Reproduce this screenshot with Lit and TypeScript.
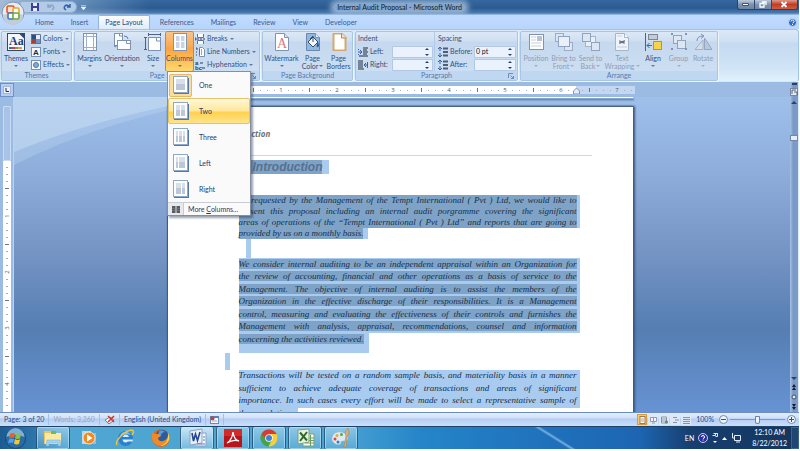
import { LitElement, html, css, svg, nothing, TemplateResult } from "lit";
import { customElement } from "lit/decorators.js";
import { classMap } from "lit/directives/class-map.js";

const wrap = (size: number, body: unknown) =>
  html`<svg width=${size} height=${size} viewBox="0 0 ${size} ${size}" aria-hidden="true">${body}</svg>`;

const sheet = (x: number, y: number, w: number, h: number) =>
  svg`<rect x=${x + 0.5} y=${y + 0.5} width=${w} height=${h} fill="#fdfeff" stroke="#7f93ae"/>`;

const box = (x: number, y: number, w: number, h: number, fill: string, stroke: string) =>
  svg`<rect x=${x} y=${y} width=${w} height=${h} fill=${fill} stroke=${stroke}/>`;

/* Large 18px ribbon icons */
const big: Record<string, TemplateResult> = {
  themes: wrap(18, svg`${box(0.5, 0.5, 17, 17, "#f4f7fb", "#31486b")}<path d="M12 .5h5.500v5.500z" fill="#31486b"/>
    <text x="2" y="12" font-family="Liberation Serif, serif" font-weight="700" font-size="12" fill="#24406e">Aa</text>
    <path d="M2 15h3" stroke="#3a6cb4" stroke-width="2"/><path d="M5 15h3" stroke="#c8453c" stroke-width="2"/><path d="M8 15h3" stroke="#7aa03c" stroke-width="2"/><path d="M11 15h4" stroke="#e89a3c" stroke-width="2"/>`),
  margins: wrap(18, svg`${sheet(2, 0, 13, 17)}<path d="M5.500 1v16M12.500 1v16M3 3.500h12M3 14.500h12" stroke="#9fb2cc" fill="none"/>`),
  orientation: wrap(18, svg`${sheet(1, 0, 8, 12)}<path d="M6.500 0v3h3" fill="none" stroke="#7f93ae"/>${sheet(4, 7, 13, 9)}<path d="M13.500 7v3.500h4" fill="none" stroke="#7f93ae"/><path d="M11 3q4 0 4 3M4 12q-1 3-3 1" fill="none" stroke="#5a7eae"/>`),
  size: wrap(18, svg`${sheet(4, 4, 12, 13)}<path d="M12.500 4v4h4" fill="none" stroke="#7f93ae"/><path d="M4 1.500h13M4.500 0v3M16.500 0v3M1.500 4v13M0 4.500h3M0 16.500h3" stroke="#49648c" fill="none"/>`),
  columns: wrap(18, svg`${sheet(2, 0, 13, 17)}<path d="M5 3h3.500v5H5zM10 3h3.500v5H10zM5 9h3.500v6H5zM10 9h3.500v6H10z" fill="#c9d3e3"/>`),
  watermark: wrap(18, svg`<path d="M2.500.5h9l4 4v13h-13z" fill="#fdfeff" stroke="#7f93ae"/><path d="M11.500.5v4h4" fill="#dbe5f1" stroke="#7f93ae"/><text x="4" y="15" font-family="Liberation Serif, serif" font-size="14" fill="#d77d7d">A</text>`),
  color: wrap(18, svg`<path d="M2.500.5h9l4 4v13h-13z" fill="#8fb8e2" stroke="#6c87a9"/><path d="M11.500.5v4h4" fill="#e8f1fa" stroke="#7f93ae"/><path d="M4 9l5-5 5 5-5 5z" fill="#f3f6fa" stroke="#34506f"/><path d="M6 6l3-3v6" fill="none" stroke="#34506f"/><path d="M14 9q2 4 0 5t-1-3z" fill="#2b5c98"/>`),
  borders: wrap(18, svg`<path d="M3.500.5h8l4 4v13h-12z" fill="#fff" stroke="#d8a76c" stroke-width="2"/><path d="M11.500 0v5h5" fill="#f3dfc4" stroke="#b58a52"/>`),
  position: wrap(18, svg`${sheet(2, 1, 14, 15)}<rect x="10" y="3" width="5" height="5" fill="#b7c2d6"/><path d="M4 4h5M4 7h5M4 10h10M4 13h10" stroke="#c6cfde"/>`),
  front: wrap(18, svg`${box(0.5, 0.5, 8, 8, "#dce6f3", "#9aacc6")}${box(9.5, 9.5, 8, 8, "#dce6f3", "#9aacc6")}${box(3.5, 3.5, 11, 10, "#e9f0f9", "#8fa3c0")}`),
  back: wrap(18, svg`${box(3.5, 3.5, 10, 10, "#e9f0f9", "#a4b4cc")}${box(0.5, 0.5, 8, 8, "#dce6f3", "#8fa3c0")}${box(9.5, 9.5, 8, 8, "#dce6f3", "#8fa3c0")}`),
  wrapping: wrap(18, svg`<path d="M2.500.5h9l4 4v13h-13z" fill="#eff4fa" stroke="#a4b4cc"/><path d="M11.500.5v4h4" fill="#fff" stroke="#a4b4cc"/><path d="M6 7q2 2 6 0-1 3 0 4l-3-1-3 1q1-2 0-4" fill="#66758f"/><path d="M4 3h5M4 14h10" stroke="#c6cfde"/>`),
  align: wrap(18, svg`<path d="M1.500 0v18" stroke="#2f67b1"/>${box(4.5, 1.5, 9, 5, "#c3cbd6", "#7b8797")}${box(9.5, 8.5, 8, 8, "#f8d248", "#c0922d")}<path d="M3 12.500h5M5.500 10L3 12.500 5.500 15" fill="none" stroke="#2f67b1"/>`),
  group: wrap(18, svg`${box(3.5, 2.5, 8, 8, "#dde7f3", "#8fa3c0")}${box(7.5, 7.5, 8, 8, "#dde7f3", "#8fa3c0")}<path d="M1 1h2M15 1h2M1 16h2M15 16h2" stroke="#8093b4" stroke-width="2"/>`),
  rotate: wrap(18, svg`<path d="M1 16.500h8V7z" fill="#d5dfec" stroke="#a3b2c9"/><path d="M10.500 5v11.500H18z" fill="#b9c7db" stroke="#94a6c1"/><path d="M3 8q0-5 6-5M7 1l3 2-3 2.500" fill="none" stroke="#7c91b3"/>`),
};

/* Small 10px ribbon icons */
const small: Record<string, TemplateResult> = {
  colors: wrap(10, svg`<path d="M0 0h5v5H0z" fill="#2a4e84"/><path d="M5 0h5v5H5z" fill="#e9eef6"/><path d="M0 5h5v5H0z" fill="#a8402f"/><path d="M5 5h5v5H5z" fill="#6e94cc"/><path d="M.5.5h9v9h-9z" fill="none" stroke="#5b7498"/>`),
  fonts: wrap(10, svg`${box(0.5, 0.5, 9, 9, "#f4f7fb", "#7990b2")}<text x="2" y="8" font-family="Liberation Sans, sans-serif" font-weight="700" font-size="8" fill="#1d2d4a">A</text>`),
  effects: wrap(10, svg`${box(0.5, 0.5, 9, 9, "#f4f7fb", "#7990b2")}<circle cx="5" cy="5" r="2.500" fill="#7faadd" stroke="#4c79b4"/>`),
  breaks: wrap(10, svg`<path d="M2.500 0v3.500h6V0M2.500 10V6.500h6V10" fill="#fff" stroke="#5b7498"/><path d="M2 5h8" stroke="#2b4570" stroke-dasharray="2 1"/><path d="M0 3l2 2-2 2z" fill="#2f67b1"/>`),
  lines: wrap(10, svg`<path d="M1 1h1v2M1 5h1M1 8h1" stroke="#2b4570" fill="none"/><path d="M4.500.5h3l2 2v7h-5z" fill="#fff" stroke="#7990b2"/><path d="M4 3h4M4 5h4M4 7h4" stroke="#33507c" stroke-dasharray="1 1"/>`),
  hyphen: wrap(10, svg`<text x="0" y="5" font-family="Liberation Sans, sans-serif" font-weight="700" font-size="6" fill="#2b3c58">a</text><path d="M5 3h3M7 8h3" stroke="#2b3c58"/><text x="0" y="10" font-family="Liberation Sans, sans-serif" font-weight="700" font-size="6" fill="#2b3c58">bc</text>`),
  left: wrap(10, svg`<path d="M5 1h5M5 3h4M5 5h5M5 7h4M1 9h9" stroke="#222d40"/><path d="M0 5h4M2 3l2 2-2 2M.5 2v1M.5 7v1" stroke="#3563a5" fill="none"/>`),
  right: wrap(10, svg`<path d="M0 1h5M0 3h5M0 5h5M0 7h5M0 9h6" stroke="#222d40"/><path d="M9 5H6M8 3L6 5l2 2M9.500 2v6" stroke="#3563a5" fill="none"/>`),
  before: wrap(10, svg`<path d="M5 1.500h5M5 5h5M5 8.500h5" stroke="#4b5e7d" stroke-width="2"/><path d="M2 0v4M0 2l2-2 2 2M2 6v4M0 8l2 2 2-2" stroke="#3563a5" fill="none"/>`),
};

const colIcon = (kind: string) => {
  const cols: Record<string, number[][]> = {
    One: [[3, 9]],
    Two: [[3, 4], [8, 4]],
    Three: [[3, 2], [6, 3], [10, 2]],
    Left: [[3, 2], [6, 6]],
    Right: [[3, 5], [9, 3]],
  };
  return html`<svg width="16" height="18" viewBox="0 0 16 18" aria-hidden="true">
    <path d="M1 2h15v16H1z" fill="#5479a8"/>
    <rect x=".5" y=".5" width="14" height="16" fill="#fff" stroke="#8ba9cc"/>
    ${cols[kind].map(([x, w]) => svg`<path d=${`M${x} 3h${w}v5h-${w}z`} fill="#d8dfe9"/><path d=${`M${x} 8h${w}v6h-${w}z`} fill="#bcc8d8"/>`)}
  </svg>`;
};

const caret = html`<svg class="caret" width="4" height="2" viewBox="0 0 4 2" aria-hidden="true"><path d="M0 0h4L2 2z" fill="currentColor"/></svg>`;
const launcher = html`<svg class="launch" width="6" height="6" viewBox="0 0 6 6" aria-hidden="true"><path d="M.5 5V.5H5M2.500 2.500l3 3M5.500 3v2.500H3" fill="none" stroke="#6c8db9"/></svg>`;

@customElement("word-ribbon")
export class WordRibbon extends LitElement {
  static styles = css`
    :host { display: block; }
    button, input { font: inherit; color: inherit; border: 0; padding: 0; margin: 0; background: none; }
    svg { display: block; flex: none; }
    .tabs { display: flex; gap: 3px; height: 14px; padding-left: 28px; align-items: stretch; background: linear-gradient(#bfdbff, #b9d4fb); }
    .tab { padding: 0 7px; color: #3c5a8c; white-space: nowrap; }
    .tab.on { background: linear-gradient(#fbfdff, #e0ebf8); border: 1px solid #93b4df; border-bottom: 0; border-radius: 2px 2px 0 0; padding: 0 6px; color: #2a4675; }
    .help { margin-left: auto; padding-right: 2px; align-self: center; }
    .body { display: grid; grid-template-columns: 71px 186px 91px 163px 198px; gap: 2px; height: 53px; box-sizing: border-box; padding: 1px 1px 1px 1px; border: 1px solid #a3c3e8; border-width: 1px 1px 0 0; border-bottom: 1px solid #d4e8fb; background: linear-gradient(#dbe8f7 0, #cddff3 12px, #c5d9f0 13px, #d0e4f6 38px, #dff1fb 50px); border-radius: 0 3px 3px 0; }
    .group { position: relative; display: flex; flex-direction: column; border: 1px solid #a9c5e6; border-radius: 2px; background: linear-gradient(#dce8f6 0, #cfdff1 9px, #c5d8ee 10px, #cfe0f3); box-shadow: 1px 1px 0 #eef6fd; min-width: 0; }
    .tools { display: flex; flex: 1; padding-left: 1px; }
    .label { height: 9px; line-height: 9px; text-align: center; color: #5578ac; background: #bfd7f1; position: relative; }
    .launch { position: absolute; right: 3px; top: 2px; }
    .caret { opacity: .7; }
    .btn { display: flex; flex-direction: column; align-items: center; width: var(--w); padding-top: 1px; color: #33517f; line-height: 8px; box-sizing: border-box; }
    .btn svg + .cap { margin-top: 3px; }
    .cap { white-space: nowrap; text-align: center; }
    .cap .caret { display: inline-block; vertical-align: 2px; margin-left: 1px; }
    .btn > .caret { margin-top: 3px; }
    .btn.off { color: #8f9cb3; }
    .btn.hot { background: linear-gradient(#fbc386 0, #f9a94e 15px, #fba23f 16px, #fdd66f 38px); box-shadow: 0 0 0 1px #b98a4c; border-radius: 2px; margin-left: 1px; color: #3f4d63; }
    .rows { display: grid; grid-template-rows: repeat(3, 13px); margin-left: 2px; }
    .row { display: flex; align-items: center; gap: 2px; color: #33517f; white-space: nowrap; }
    .fields { display: grid; grid-template-columns: 10px 20px 41px; grid-template-rows: repeat(3, 13px); align-items: center; column-gap: 2px; padding: 0 1px; color: #33517f; }
    .fields.wide { grid-template-columns: 10px 22px 42px; border-left: 1px solid #b2cae6; padding-left: 3px; }
    .fields .title { grid-column: 1 / 4; }
    .fields label { white-space: nowrap; }
    .spin { position: relative; height: 12px; box-sizing: border-box; border: 1px solid #b2c9e6; background: #eaf3fd; display: flex; align-items: center; justify-content: space-between; padding-right: 3px; }
    .spin input { min-width: 0; width: 24px; padding-left: 1px; outline: 0; color: #111; }
    .menu { position: absolute; z-index: 5; left: 92px; top: 39px; width: 84px; box-sizing: border-box; border: 1px solid #868fa0; background: #fafafb; box-shadow: 2px 2px 2px rgba(30, 50, 80, .45); color: #2a3a6c; }
    .item { display: flex; align-items: center; width: 100%; height: 26px; box-sizing: border-box; border: 1px solid transparent; padding-right: 4px; }
    .item .pic { display: flex; align-items: center; justify-content: center; width: 23px; height: 23px; box-sizing: border-box; border: 1px solid transparent; }
    .item .name { padding-left: 7px; }
    .item.cur .pic { border: 1px solid #e5b766; background: #fbdc9a; border-radius: 2px; }
    .item.sel { background: linear-gradient(#fff7d9 0, #ffe89a 12px, #ffd24d 13px, #ffe48d); border-color: #e3c36b; border-radius: 2px; }
    .more { display: flex; align-items: stretch; width: 100%; height: 13px; border-top: 1px solid #c9cdd3; line-height: 12px; white-space: nowrap; }
    .more .pic { width: 15px; display: flex; align-items: center; justify-content: center; background: #e6eaec; border-right: 1px solid #c9cdd3; }
    .more .name { padding-left: 4px; }
  `;

  private btn(icon: string, lines: string[], w: number, opts: { off?: boolean; hot?: boolean; plain?: boolean } = {}) {
    const two = lines.length > 1;
    return html`<button class=${classMap({ btn: true, off: !!opts.off, hot: !!opts.hot })} style="--w:${w}px" ?disabled=${!!opts.off}>
      ${big[icon]}
      <span class="cap">${lines[0]}${two ? html`<br />${lines[1]}${opts.plain ? nothing : caret}` : nothing}</span>
      ${two ? nothing : caret}
    </button>`;
  }
  private row(icon: string, name: string) {
    return html`<button class="row">${small[icon]}<span>${name}</span>${caret}</button>`;
  }
  private field(icon: string, name: string, value: string) {
    return html`${small[icon]}<label for=${name}>${name}:</label>
      <span class="spin"><input id=${name} type="text" .value=${value} />
        <svg width="4" height="8" viewBox="0 0 4 8" aria-hidden="true"><path d="M0 2h4L2 0zM0 6h4L2 8z" fill="#27406b"/></svg></span>`;
  }

  render() {
    const tabs = ["Home", "Insert", "Page Layout", "References", "Mailings", "Review", "View", "Developer"];
    const off = { off: true };
    return html`
      <div class="tabs" role="tablist">
        ${tabs.map((t) => html`<button role="tab" class=${classMap({ tab: true, on: t === "Page Layout" })}>${t}</button>`)}
        <button class="help" aria-label="Help"><svg width="9" height="9" viewBox="0 0 9 9"><circle cx="4.500" cy="4.500" r="4" fill="#2f69bd" stroke="#c6dcf7"/><path d="M3 3.500q0-1.500 1.500-1.500T6 3.500 4.500 5M4.500 6v1" stroke="#fff" fill="none"/></svg></button>
      </div>
      <div class="body">
        <section class="group">
          <div class="tools">${this.btn("themes", ["Themes"], 26)}
            <div class="rows">${this.row("colors", "Colors")}${this.row("fonts", "Fonts")}${this.row("effects", "Effects")}</div></div>
          <div class="label">Themes</div>
        </section>
        <section class="group">
          <div class="tools">
            ${this.btn("margins", ["Margins"], 27)}${this.btn("orientation", ["Orientation"], 38)}${this.btn("size", ["Size"], 24)}${this.btn("columns", ["Columns"], 27, { hot: true })}
            <div class="rows">${this.row("breaks", "Breaks")}${this.row("lines", "Line Numbers")}${this.row("hyphen", "Hyphenation")}</div>
          </div>
          <div class="label">Page Setup${launcher}</div>
          <div class="menu" role="menu">
            ${["One", "Two", "Three", "Left", "Right"].map((n) => html`<button role="menuitem" class=${classMap({ item: true, cur: n === "One", sel: n === "Two" })}><span class="pic">${colIcon(n)}</span><span class="name">${n}</span></button>`)}
            <button role="menuitem" class="more"><span class="pic"><svg width="8" height="7" viewBox="0 0 8 7"><path d="M0 0h3.500v7H0zM4.500 0H8v7H4.500z" fill="#585c60"/><path d="M0 2.500h8M0 4.500h8" stroke="#84888c" stroke-width=".5"/></svg></span><span class="name">More <u>C</u>olumns...</span></button>
          </div>
        </section>
        <section class="group">
          <div class="tools">${this.btn("watermark", ["Watermark"], 35)}${this.btn("color", ["Page", "Color"], 27)}${this.btn("borders", ["Page", "Borders"], 25, { plain: true })}</div>
          <div class="label">Page Background</div>
        </section>
        <section class="group">
          <div class="tools">
            <div class="fields"><span class="title">Indent</span>${this.field("left", "Left", "")}${this.field("right", "Right", "")}</div>
            <div class="fields wide"><span class="title">Spacing</span>${this.field("before", "Before", "0 pt")}${this.field("before", "After", "")}</div>
          </div>
          <div class="label">Paragraph${launcher}</div>
        </section>
        <section class="group">
          <div class="tools">
            ${this.btn("position", ["Position"], 28, off)}${this.btn("front", ["Bring to", "Front"], 27, off)}${this.btn("back", ["Send to", "Back"], 27, off)}${this.btn("wrapping", ["Text", "Wrapping"], 36, off)}${this.btn("align", ["Align"], 26)}${this.btn("group", ["Group"], 25, off)}${this.btn("rotate", ["Rotate"], 24, off)}
          </div>
          <div class="label">Arrange</div>
        </section>
      </div>`;
  }
}

@customElement("word-document")
export class WordDocument extends LitElement {
  static styles = css`
    :host { display: grid; grid-template: 15px 1fr / 14px 1fr 9px; min-height: 0; background: #9cbbe2; }
    svg { display: block; }
    .corner { display: flex; align-items: center; justify-content: center; border: 1px solid #6f8fc9; background: #b6cdef; margin: 1px 0 0; }
    .hrule { display: flex; justify-content: center; align-items: center; padding-right: 2px; overflow: hidden; font-size: 6px; }
    .vrule { padding: 9px 0 0 3px; overflow: hidden; border-right: 1px solid #bcd3ef; box-sizing: border-box; font-size: 6px; }
    .desk { position: relative; overflow: hidden; padding-right: 4px; background: linear-gradient(#9fc0eb 0, #8eaddb 75px, #7796c6 150px, #557eb2 232px, #6793d3 315px); }
    .sheen { position: absolute; left: 0; top: 0; }
    .prev, .page { position: relative; width: 465px; margin: 0 auto; background: #fff; box-sizing: border-box; }
    .prev { height: 1px; box-shadow: 1px 2px 2px #39506f; margin-bottom: 8px; }
    .page { padding: 22px 53px 0 71px; height: 700px; box-shadow: 2px 0 2px #3a567f, -1px 0 1px #3f5d8a; border-top: 1px solid #47617f; }
    .head { margin: 0 -12px 0 -16px; height: 26px; border-bottom: 1px solid #fbcfa8; font: italic 700 8px/10px "Noto Sans", sans-serif; color: #6f7277; }
    .sel { background: #a9cbef; }
    .dark { background: #7fa3c6; }
    h1 { display: flex; width: fit-content; margin: 4px 0 21px; padding-right: 7px; font: italic 700 12px/14px "Liberation Sans", Arial, sans-serif; color: #56718f; }
    h1 .num { width: 14px; }
    .para { display: grid; margin: 0; font: italic 9px/11px "Liberation Serif", "Times New Roman", serif; color: #16304c; }
    .line { padding-right: 3px; white-space: nowrap; text-align: justify; text-align-last: justify; }
    .line.end { width: fit-content; padding-right: 5px; text-align-last: left; }
    .t { display: block; }
    .tight { grid-auto-rows: 11px; }
    .loose { grid-template-rows: repeat(7, 1fr); height: 87px; }
    .loose .line { padding-top: 1px; }
    .loose .t { line-height: 10px; }
    .loose .line.end { margin-bottom: -8px; }
    .open { grid-template-rows: repeat(4, 1fr); height: 50px; }
    .mark { width: 5px; height: 19px; margin-left: 7px; }
    .mark.out { height: 17px; margin: 8px 0 0 -14px; }
    .scroll { grid-column: 3; grid-row: 1 / 3; display: flex; flex-direction: column; align-items: center; gap: 3px; padding: 1px 0 2px; box-sizing: border-box; background: linear-gradient(90deg, #a7c2e6, #7898c6 40%, #7d9cc9); color: #29426d; border-right: 1px solid #dbe9f9; }
    .thumb { width: 8px; height: 6px; margin-top: 27px; box-sizing: border-box; border: 1px solid #6f87a8; background: #e9eef5; }
    .scroll .grow { flex: 1; }
  `;

  private ticks(vertical: boolean, from: number, to: number, zero: number) {
    const out = [];
    for (let i = from; i <= to; i++) {
      const p = zero + i * 7;
      if (i % 8 === 0) {
        if (i === 0) continue;
        const n = Math.abs(i / 8);
        out.push(vertical
          ? svg`<text x="0" y="0" transform="translate(6 ${p}) rotate(-90)" text-anchor="middle" fill="#4d596b">${n}</text>`
          : svg`<text x=${p} y="6" text-anchor="middle" fill="#4d596b">${n}</text>`);
      } else {
        const half = i % 4 === 0;
        const a = half ? 2 : 3, l = half ? 4 : 2;
        const stroke = half ? "#6a7685" : "#a3acb8";
        out.push(vertical
          ? svg`<path d=${`M${a} ${p + 0.5}h${l}`} stroke=${stroke}/>`
          : svg`<path d=${`M${p + 0.5} ${half ? 2 : 4}v${half ? 4 : 1}`} stroke=${stroke}/>`);
      }
    }
    return out;
  }
  private lines(cls: string, dark: boolean, text: string[]) {
    return html`<p class="para ${cls}">${text.map((t, i) => html`<span class=${classMap({ line: true, sel: true, end: i === text.length - 1 })}><span class=${classMap({ t: true, dark })}>${t}</span></span>`)}</p>`;
  }

  render() {
    return html`
      <div class="corner"><svg width="8" height="8" viewBox="0 0 8 8"><rect x=".5" y=".5" width="7" height="7" fill="#eaf1fb" stroke="#9fb6da"/><path d="M3 2v3.500h3" fill="none" stroke="#1d2c4a"/></svg></div>
      <div class="hrule"><svg width="467" height="8" viewBox="0 0 467 8" font-family="Open Sans, sans-serif">
        <path d="M0 0h467v8H0z" fill="#c3d7f0"/><path d="M57 0h351v8H57z" fill="#fff"/>
        ${this.ticks(false, -7, 58, 57)}
        <path d="M405.500 8V5l3-3 3 3v3z" fill="#e7edf5" stroke="#8796ad"/></svg></div>
      <div class="vrule"><svg width="8" height="700" viewBox="0 0 8 700" font-family="Open Sans, sans-serif">
        <path d="M.5.5h7v54h-7z" fill="#a9c3e8" stroke="#c9dcf4"/><path d="M0 55h8v645H0z" fill="#fff"/>
        ${this.ticks(true, 1, 39, 54)}</svg></div>
      <div class="desk">
        <svg class="sheen" width="240" height="70" viewBox="0 0 240 70" aria-hidden="true"><path d="M0 0h220Q90 22 0 68z" fill="#bcd8f0" fill-opacity=".35"/><path d="M0 0h205Q90 18 0 55z" fill="#d3e6f6" fill-opacity=".4"/></svg>
        <div class="prev"></div>
        <article class="page">
          <div class="head">Introduction</div>
          <h1 class="sel"><span class="num dark">1.</span><span class="dark">Introduction</span></h1>
          ${this.lines("tight", true, [
            "As requested by the Management of the Tempt International ( Pvt ) Ltd, we would like to",
            "present this proposal including an internal audit porgramme covering the significant",
            "areas of operations of the “Tempt International ( Pvt ) Ltd” and reports that are going to",
            "provided by us on a monthly basis."])}
          <div class="mark sel"></div>
          ${this.lines("loose", true, [
            "We consider internal auditing to be an independent appraisal within an Organization for",
            "the review of accounting, financial and other operations as a basis of service to the",
            "Management. The objective of internal auditing is to assist the members of the",
            "Organization in the effective discharge of their responsibilities. It is a Management",
            "control, measuring and evaluating the effectiveness of their controls and furnishes the",
            "Management with analysis, appraisal, recommendations, counsel and information",
            "concerning the activities reviewed."])}
          <div class="mark out sel"></div>
          ${this.lines("open", false, [
            "Transactions will be tested on a random sample basis, and materiality basis in a manner",
            "sufficient to achieve adequate coverage of transactions and areas of significant",
            "importance. In such cases every effort will be made to select a representative sample of",
            "the population."])}
        </article>
      </div>
      <div class="scroll">
        <svg width="7" height="2" viewBox="0 0 7 2"><path d="M1 0h5v2H1z" fill="#24406e"/></svg>
        <svg width="8" height="8" viewBox="0 0 8 8"><rect x=".5" y=".5" width="7" height="7" fill="#e5ebf4" stroke="#7587a5"/><path d="M2 6V2h4M4 4h3v3" fill="none" stroke="#53637f"/></svg>
        <svg width="6" height="6" viewBox="0 0 6 6"><path d="M0 5h6L3 2z" fill="currentColor"/></svg>
        <span class="thumb"></span><span class="grow"></span>
        <svg width="6" height="4" viewBox="0 0 6 4"><path d="M0 0h6L3 3z" fill="currentColor"/></svg>
        <svg width="6" height="7" viewBox="0 0 6 7"><path d="M1 3h4L3 0zM1 6h4L3 3z" fill="#111c33"/></svg>
        <svg width="6" height="6" viewBox="0 0 6 6"><circle cx="3" cy="3" r="2" fill="#e8eef6" stroke="#3b4c68"/></svg>
        <svg width="6" height="7" viewBox="0 0 6 7"><path d="M1 1h4L3 4zM1 4h4L3 7z" fill="#111c33"/></svg>
      </div>`;
  }
}

const app: Record<string, TemplateResult> = {
  explorer: wrap(20, svg`<path d="M1 3h7l1 2h9v11H1z" fill="#e9c560"/><path d="M2 5h16v11H2z" fill="#fbeaa2"/><path d="M8 3h5v3H8z" fill="#72b66b"/><path d="M4 12h13l1 6h-3v-3H6v3H3z" fill="#a7d3ef" stroke="#6da9d2" stroke-width=".5"/>`),
  wmp: wrap(20, svg`<path d="M3 3h9v13H3z" fill="#bcd9ee"/><path d="M9 5h8v11H9z" fill="#8fbfe2"/><circle cx="10" cy="10" r="6" fill="#f28a22" stroke="#fbe0bf"/><path d="M8 6.500l5.500 3.500L8 13.500z" fill="#fff"/>`),
  ie: wrap(20, svg`<circle cx="10.500" cy="10.500" r="7.500" fill="#2b7fd0"/><path d="M5 8q2-5 8-4l3 3q-5-2-11 1z" fill="#7cc0f2"/><path d="M7.500 9q1-2.500 3.500-2.500T14 9zM7.500 11.500h10.500l-.5 2H13q-1 1-2.500 1-2.500 0-3-3z" fill="#d8ecfa"/><path d="M2 17q-2-3 4-9t11-6q3 1 0 5" fill="none" stroke="#f0c33c" stroke-width="1.500"/>`),
  firefox: wrap(20, svg`<circle cx="10" cy="10" r="9" fill="#e0661d"/><circle cx="11" cy="8" r="6.200" fill="#2c5b9f"/><path d="M8 3q3-2 6 1-3 0-4 3t-3 1z" fill="#5a9bd8"/><path d="M2 4q1 2 3 2 4-1 5 2l-3 2q1 4 5 3 4-1 5-5 1 6-4 9-6 2-10-2Q-1 10 2 4z" fill="#f08a26"/><path d="M17 5q3 5 0 9-3 4-8 4 9-2 8-13z" fill="#f9d348"/>`),
  word: wrap(20, svg`<path d="M14 5h5v13H9" fill="#f7f9fc" stroke="#8ba1c6"/><path d="M3 3l12-2v14L3 17z" fill="#e9eff8" stroke="#8ba1c6"/><path d="M10 16h8M16 12h2M16 9h2" stroke="#5f7cb0"/><path d="M5 5l1.500 8L8.500 6l2 6.500L13 4" fill="none" stroke="#24478f" stroke-width="1.600"/>`),
  pdf: wrap(20, svg`<path d="M1 1h18v18H1z" fill="#b9141a"/><path d="M1 1h18v7H1z" fill="#d12b2b"/><path d="M4 15q5-3 6-11 1 8 6 9-6-2-12 2z" fill="none" stroke="#fff" stroke-width="1.300"/>`),
  chrome: wrap(20, svg`<circle cx="10" cy="10" r="8.500" fill="#4caf50"/><path d="M2.600 5.800A8.500 8.500 0 0 1 17.500 6H10z" fill="#db3a2f"/><path d="M2.600 5.800L7 3l5 3-5 6z" fill="#db3a2f"/><path d="M17.500 6A8.500 8.500 0 0 1 9.500 18.500L13.500 11 11 6z" fill="#f7cf3c"/><path d="M2.600 5.800L7 12l3 2-.5 4.500A8.500 8.500 0 0 1 2.600 5.800z" fill="#46a34c"/><circle cx="10" cy="10" r="3.800" fill="#fff"/><circle cx="10" cy="10" r="3" fill="#3f82d6"/>`),
  excel: wrap(20, svg`<path d="M12 6h7v12H8v-2" fill="#fbfdf9" stroke="#7ea36f"/><path d="M10 15h9M14 10h5M14 12.500h5M15.500 7v11" stroke="#6f9d5f"/><path d="M3 2l11-1v13L3 16z" fill="#e7f1e2" stroke="#7ea36f"/><path d="M5 4.500l7 8M12 4l-7 9" stroke="#2b6a2d" stroke-width="2"/>`),
  paint: wrap(20, svg`<path d="M1 9q2-6 10-5 7 2 6 7-1 3-5 2-3 0-2 3-5 2-8-2-2-2-1-5z" fill="#dbeaf4" stroke="#8fb0c8" stroke-width=".6"/><circle cx="4" cy="11" r="1.500" fill="#d8493c"/><circle cx="6" cy="7.500" r="1.500" fill="#e8a93a"/><circle cx="7" cy="14" r="1.500" fill="#3d79c4"/><circle cx="10.500" cy="6.500" r="1.500" fill="#59a94c"/><path d="M13 19L15 8l-1-4 3-4 1 5-2 4-1 10z" fill="#d9b07b" stroke="#a57c48" stroke-width=".5"/>`),
};

@customElement("app-root")
export class AppRoot extends LitElement {
  static styles = css`
    :host { display: flex; flex-direction: column; height: 100vh; box-sizing: border-box; padding: 0 1px 2px 0; background: #fff; font: 7px/9px Lato, "Open Sans", sans-serif; position: relative; overflow: hidden; }
    button { font: inherit; color: inherit; border: 0; padding: 0; margin: 0; background: none; }
    svg { display: block; flex: none; }
    .bar { display: flex; align-items: stretch; height: 15px; flex: none; background: linear-gradient(90deg, rgba(200, 216, 234, .75) 0, rgba(160, 190, 220, .5) 70px, transparent 150px), linear-gradient(#35689f, #2c5a90 8px, #4a7bb0 13px, #a6c5ea); }
    .qat { display: flex; align-items: center; gap: 8px; width: 56px; box-sizing: border-box; padding-left: 10px; margin: 1px 0 2px 21px; border: 1px solid #8fadd0; border-left: 0; border-radius: 0 7px 7px 0; background: #b3cbe6; }
    .custom { margin-left: 4px; align-self: center; }
    .title { flex: 1; display: flex; align-items: center; justify-content: center; padding-right: 24px; color: #0c1a30; }
    .title span { padding: 0 4px; border-radius: 6px; background: rgba(165, 192, 220, .75); box-shadow: 0 0 5px 3px rgba(165, 192, 220, .75); white-space: nowrap; }
    .win { display: flex; width: 61px; height: 10px; margin-right: 1px; border: 1px solid #2a4468; border-top: 0; border-radius: 0 0 3px 3px; overflow: hidden; box-sizing: border-box; }
    .win button { flex: 17; display: flex; align-items: center; justify-content: center; background: linear-gradient(#bccbdc, #7d93b0 50%, #6c85a6); border-right: 1px solid #33486a; }
    .win .x { flex: 27; border: 0; background: linear-gradient(#dd9a8b, #c23c25 50%, #cf5e41); }
    .orb { position: absolute; left: 1px; top: 1px; z-index: 3; }
    word-ribbon { flex: none; }
    word-document { flex: 1; }
    .status { display: flex; align-items: center; height: 14px; flex: none; box-sizing: border-box; border-top: 1px solid #6a8dc2; color: #2a4a80; background: linear-gradient(#e3eefc 0, #cfe0f8 5px, #b3cef3 6px, #c8ddf9 12px); white-space: nowrap; }
    .cell { padding: 0 4px; height: 11px; line-height: 11px; border-right: 1px solid #a5c0e6; display: flex; align-items: center; }
    .cell.dim { color: #98a7bf; }
    .cell.icon { padding: 0 3px; }
    .views { margin-left: auto; display: flex; gap: 1px; height: 11px; padding-right: 5px; }
    .views button { width: 10px; display: flex; align-items: center; justify-content: center; background: #dde8f8; }
    .views .on { background: #fbc96f; box-shadow: inset 0 0 0 1px #d89b42; }
    .zoom { display: flex; align-items: center; gap: 2px; padding: 0 3px 0 5px; }
    .zoom input { appearance: none; width: 55px; height: 9px; margin: 0; background: linear-gradient(#7f97bd, #7f97bd) center / 100% 1px no-repeat; }
    .zoom input::-webkit-slider-thumb { appearance: none; width: 5px; height: 8px; background: #eef4fc; border: 1px solid #6982ab; border-radius: 1px 1px 3px 3px; }
    .task { display: flex; align-items: stretch; height: 23px; flex: none; box-sizing: border-box; border-top: 1px solid #1d4468; color: #fff; background: linear-gradient(32deg, transparent 46%, rgba(160, 210, 242, .65) 50%, transparent 54%) 525px 0 / 60px 100% no-repeat, linear-gradient(90deg, #1d5c90 0, #2b76ab 35px, #4fa6d2 70px, #4aa3d3 340px, #2585c8 420px, #1f6fbb 560px, #1d65b2 640px, #173f70 690px, #15365f 790px); }
    .start { width: 36px; display: flex; align-items: center; padding-left: 5px; box-sizing: border-box; }
    .apps { display: flex; gap: 2px; }
    .apps button { width: 34px; display: flex; align-items: center; justify-content: center; box-sizing: border-box; }
    .apps .open { border: 1px solid rgba(20, 60, 95, .75); border-width: 0 1px; border-radius: 2px; box-shadow: inset 0 0 0 1px rgba(200, 232, 250, .55); background: linear-gradient(rgba(190, 225, 243, .6), rgba(110, 185, 225, .35)); }
    .apps .front { background: linear-gradient(rgba(225, 242, 250, .85), rgba(140, 200, 232, .6)); }
    .tray { margin-left: auto; display: flex; align-items: center; gap: 4px; }
    .clock { text-align: center; line-height: 11px; padding-left: 6px; }
    .desktop { align-self: stretch; width: 8px; border: 1px solid #3e6389; background: #1f4673; }
  `;

  render() {
    return html`
      <header class="bar">
        <div class="qat">
          <button aria-label="Save"><svg width="8" height="8" viewBox="0 0 8 8"><path d="M0 0h8v8H0z" fill="#3d3f9e"/><path d="M2 0h4v3H2zM2 5h4v3H2z" fill="#e8ebf8"/></svg></button>
          <button aria-label="Undo"><svg width="8" height="8" viewBox="0 0 8 8"><path d="M1 1v3h3M1.500 3.500Q4 1 6 3t-1 4" fill="none" stroke="#8ba5c8" stroke-width="1.500"/></svg></button>
          <button aria-label="Redo"><svg width="8" height="8" viewBox="0 0 8 8"><path d="M7 1v3H4M6.500 3.500Q4 1 2 3t1 4" fill="none" stroke="#2d62b8" stroke-width="1.500"/></svg></button>
        </div>
        <button class="custom" aria-label="Customize"><svg width="5" height="5" viewBox="0 0 5 5"><path d="M0 .5h5M0 2h5L2.500 5z" stroke="#e8f0fa" stroke-width=".5" fill="#e8f0fa"/></svg></button>
        <div class="title"><span>Internal Audit Proposal - Microsoft Word</span></div>
        <div class="win">
          <button aria-label="Minimize"><svg width="7" height="3" viewBox="0 0 7 3"><path d="M.5.5h6v2h-6z" fill="#fff" stroke="#42536b"/></svg></button>
          <button aria-label="Restore"><svg width="8" height="7" viewBox="0 0 8 7"><path d="M3 1h4v3M1 2.500h4v3.500H1z" fill="none" stroke="#fff" stroke-width="1.300"/></svg></button>
          <button class="x" aria-label="Close"><svg width="8" height="7" viewBox="0 0 8 7"><path d="M1.500 1l5 5M6.500 1l-5 5" stroke="#fff" stroke-width="1.800"/></svg></button>
        </div>
      </header>
      <button class="orb" aria-label="Office"><svg width="24" height="24" viewBox="0 0 24 24">
        <circle cx="12" cy="12" r="11" fill="#e6ebf2" stroke="#8494ad"/><path d="M2 14a10 10 0 0 0 20 0q-10-4-20 0z" fill="#c3ccd9"/>
        <rect x="6" y="5" width="7" height="7" rx="1.500" fill="#fbe3d0" stroke="#e2571f" stroke-width="1.600"/>
        <rect x="12" y="7" width="6" height="6" rx="1.500" fill="#fff" stroke="#f0a52a" stroke-width="1.600"/>
        <rect x="7" y="12" width="6" height="6" rx="1.500" fill="#fff" stroke="#3f79c9" stroke-width="1.600"/>
        <rect x="12" y="12" width="6" height="6" rx="1.500" fill="#fff" stroke="#6fa83a" stroke-width="1.600"/></svg></button>
      <word-ribbon></word-ribbon>
      <word-document></word-document>
      <footer class="status">
        <span class="cell">Page: 3 of 20</span><span class="cell dim">Words: 3,260</span>
        <span class="cell icon"><svg width="13" height="10" viewBox="0 0 13 10"><path d="M2 5l5-3 4 3-5 4z" fill="#fff" stroke="#6781a8"/><path d="M5 1l6 6M11 1L5 7" stroke="#cf3b27" stroke-width="1.600"/></svg></span>
        <span class="cell">English (United Kingdom)</span>
        <span class="cell"><svg width="9" height="8" viewBox="0 0 9 8"><rect x=".5" y=".5" width="8" height="7" fill="#f6f9fd" stroke="#6c87b0"/><path d="M0 0h9v2H0z" fill="#5b7fb8"/><circle cx="2.500" cy="2.500" r="2" fill="#c9412f"/><path d="M2 5h5" stroke="#9db0cc"/></svg></span>
        <div class="views">
          ${["Print Layout", "Reading", "Web", "Outline", "Draft"].map((v, i) => html`<button class=${i ? "" : "on"} aria-label=${v}><svg width="7" height="8" viewBox="0 0 7 8">${[
            svg`<rect x="1" y=".5" width="5" height="7" fill="#fff" stroke="#a07a42"/><path d="M2 3h3M2 5h3" stroke="#b7a181"/>`,
            svg`<path d="M.5 1.500h6v4h-6zM3.500 1v5M2 7h3" fill="#f3f5f9" stroke="#8f9bb0"/>`,
            svg`<path d="M.5 1h5v6h-5zM1 3h4M1 5h4" fill="#f3f5f9" stroke="#8792a5"/><circle cx="5.500" cy="6" r="1.500" fill="#4b8c7a"/>`,
            svg`<path d="M1 1.500h4M3 4h4M1 6.500h4" stroke="#8792a5"/>`,
            svg`<path d="M0 1.500h7M0 3.500h7M0 5.500h7M0 7.500h7" stroke="#8792a5"/>`][i]}</svg></button>`)}
        </div>
        <span>100%</span>
        <div class="zoom">
          <button aria-label="Zoom out"><svg width="9" height="9" viewBox="0 0 9 9"><circle cx="4.500" cy="4.500" r="4" fill="#eef4fc" stroke="#7189b0"/><path d="M2 4.500h5" stroke="#36527f"/></svg></button>
          <input type="range" min="0" max="100" value="50" aria-label="Zoom" />
          <button aria-label="Zoom in"><svg width="9" height="9" viewBox="0 0 9 9"><circle cx="4.500" cy="4.500" r="4" fill="#eef4fc" stroke="#7189b0"/><path d="M2 4.500h5M4.500 2v5" stroke="#36527f"/></svg></button>
        </div>
      </footer>
      <nav class="task">
        <button class="start" aria-label="Start"><svg width="21" height="21" viewBox="0 0 21 21"><circle cx="10.500" cy="10.500" r="10" fill="#2a6aa5" stroke="#184976"/><path d="M1.500 9a9 9 0 0 1 18 0q-9-4-18 0z" fill="#7db0d8"/><path d="M5 6q2-1.500 5-.5L9 10q-2-1-5 .5z" fill="#e8622c"/><path d="M11 6q2 1 5 0l-1 4.500q-3 1-5-.5z" fill="#8cc13f"/><path d="M4 11.500q2-1.500 5-.5l-1 4q-2-1-5 .5z" fill="#4aa6e8"/><path d="M10 11q2 1.500 5 .5l-1 4.500q-3 1-5-.5z" fill="#f7c62f"/></svg></button>
        <div class="apps">
          ${[["explorer", "open"], ["wmp", ""], ["ie", ""], ["firefox", ""], ["word", "open front"], ["pdf", "open"], ["chrome", "open"], ["excel", "open"], ["paint", "open"]].map(([n, c]) => html`<button class=${c} aria-label=${n}>${app[n]}</button>`)}
        </div>
        <div class="tray">
          <span>EN</span>
          <svg width="10" height="10" viewBox="0 0 10 10"><circle cx="5" cy="5" r="4.500" fill="#2b2fa5" stroke="#c3cbe9"/><path d="M3.500 4q0-1.500 1.500-1.500T6.500 4 5 5.500M5 6.500v1" stroke="#fff" fill="none"/></svg>
          <svg width="6" height="12" viewBox="0 0 6 12"><path d="M1.500 1.500h4M.5 3.500h3v-2h2v3h-2" fill="none" stroke="#e3ebf5"/><path d="M1 9h4L3 11z" fill="#fff"/></svg>
          <svg width="5" height="4" viewBox="0 0 5 4"><path d="M0 4h5L2.500 1z" fill="#fff"/></svg>
          <svg width="11" height="10" viewBox="0 0 11 10"><path d="M3.500 2.500h6v5h-6zM5 9h4M1.500 0v5h2" fill="none" stroke="#e3ebf5"/></svg>
          <span class="clock">12:10 AM<br />8/22/2012</span>
          <button class="desktop" aria-label="Show desktop"></button>
        </div>
      </nav>`;
  }
}
